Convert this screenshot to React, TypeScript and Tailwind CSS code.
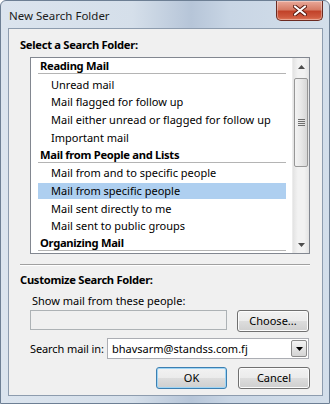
import React from "react";

const font = "font-['Segoe_UI','Noto_Sans','DejaVu_Sans',sans-serif]";
const fs = "text-[11px]";
const fb = "text-[11.2px] font-bold tracking-[-0.3px]";

function Heading({ text }: { text: string }) {
  return (
    <div className="h-[18px]">
      <div className={"pl-[9px] leading-[15px] text-black whitespace-nowrap " + fb}>{text}</div>
      <div className="ml-[7px] w-[248px] h-px bg-[#b4b4b4]" />
    </div>
  );
}

function Item({ text, selected }: { text: string; selected?: boolean }) {
  return (
    <div className="h-[18px] flex items-center">
      <div
        className={
          "ml-[7px] w-[248px] h-[16px] pl-[13px] leading-[16px] text-black whitespace-nowrap " +
          fs +
          " " +
          (selected ? "bg-[#aecff0]" : "")
        }
      >
        {text}
      </div>
    </div>
  );
}

function Btn({ label, w, def }: { label: string; w: string; def?: boolean }) {
  return (
    <div
      className={
        "h-[22px] rounded-[3px] border flex items-center justify-center text-black bg-[linear-gradient(#f2f2f2_0%,#ebebeb_50%,#dddddd_50%,#cfcfcf_100%)] " +
        fs +
        " " +
        (def ? "border-[#3c7fb1] shadow-[inset_0_0_0_1px_#9fd5f5]" : "border-[#707070] shadow-[inset_0_0_0_1px_#fcfcfc]") +
        " " +
        w
      }
    >
      {label}
    </div>
  );
}

export default function App() {
  return (
    <div
      className={
        "w-[330px] h-[404px] flex flex-col overflow-hidden rounded-t-[6px] border border-[#6d7f94] bg-[linear-gradient(90deg,#dbe4ee_0%,#d5dfea_40%,#b6c5d8_58%,#c9d6e5_70%,#d3deea_100%)] " +
        font
      }
    >
      {/* Title bar */}
      <div className="h-[27px] flex items-start shrink-0">
        <div className="pl-[8px] pt-[7px] text-[11.5px] leading-[16px] text-[#1b1b1b] whitespace-nowrap">New Search Folder</div>
        <div className="ml-auto mr-[6px] w-[47px] h-[20px] rounded-b-[5px] border border-t-0 border-[#6b2a21] bg-[linear-gradient(#e9a99a_0%,#d67c66_45%,#c2432a_55%,#cf5a3f_85%,#e07a5c_100%)] flex items-center justify-center shadow-[inset_0_0_0_1px_rgba(255,255,255,0.35)]">
          <svg width="14" height="11" viewBox="0 0 14 11">
            <path d="M2 1.5 L12 9.5 M12 1.5 L2 9.5" stroke="#5a1a10" strokeWidth="4" strokeLinecap="round" />
            <path d="M2 1.5 L12 9.5 M12 1.5 L2 9.5" stroke="#ffffff" strokeWidth="2.2" strokeLinecap="round" />
          </svg>
        </div>
      </div>

      {/* Client area */}
      <div className="ml-[7px] mr-[6px] mb-[7px] flex-1 border border-[#8d9cae] bg-[#f0f0f0] flex flex-col text-black">
        <div className={"mt-[8px] pl-[11px] leading-[16px] whitespace-nowrap " + fb}>Select a Search Folder:</div>

        {/* List box */}
        <div className="mt-[4px] ml-[21px] w-[280px] h-[197px] border border-[#828790] bg-white flex overflow-hidden">
          <div className="flex-1 flex flex-col overflow-hidden">
            <Heading text="Reading Mail" />
            <Item text="Unread mail" />
            <Item text="Mail flagged for follow up" />
            <Item text="Mail either unread or flagged for follow up" />
            <Item text="Important mail" />
            <Heading text="Mail from People and Lists" />
            <Item text="Mail from and to specific people" />
            <Item text="Mail from specific people" selected />
            <Item text="Mail sent directly to me" />
            <Item text="Mail sent to public groups" />
            <Heading text="Organizing Mail" />
          </div>
          {/* Scrollbar */}
          <div className="w-[17px] flex flex-col bg-[linear-gradient(90deg,#e3e3e3,#f2f2f2_30%,#f2f2f2_70%,#e3e3e3)] border-l border-[#ececec]">
            <div className="h-[17px] flex items-center justify-center">
              <svg width="7" height="4" viewBox="0 0 7 4">
                <path d="M0 4 L3.5 0 L7 4 Z" fill="#4d4d4d" />
              </svg>
            </div>
            <div className="mt-[3px] mx-[1px] h-[89px] rounded-[2px] border border-[#979797] bg-[linear-gradient(90deg,#f3f3f3,#e8e8e8_50%,#d6d6d6)] flex items-center justify-center">
              <div className="flex flex-col gap-[1px]">
                <div className="w-[7px] h-px bg-[#6e6e6e]" />
                <div className="w-[7px] h-px bg-[#6e6e6e]" />
                <div className="w-[7px] h-px bg-[#6e6e6e]" />
                <div className="w-[7px] h-px bg-[#6e6e6e]" />
              </div>
            </div>
            <div className="flex-1" />
            <div className="h-[17px] flex items-center justify-center">
              <svg width="7" height="4" viewBox="0 0 7 4">
                <path d="M0 0 L7 0 L3.5 4 Z" fill="#4d4d4d" />
              </svg>
            </div>
          </div>
        </div>

        {/* Separator */}
        <div className="mt-[10px] ml-[11px] w-[290px]">
          <div className="h-px bg-[#a0a0a0]" />
          <div className="h-px bg-white" />
        </div>

        <div className={"mt-[6px] pl-[11px] leading-[16px] whitespace-nowrap " + fb}>Customize Search Folder:</div>
        <div className={"mt-[5px] pl-[23px] leading-[16px] whitespace-nowrap " + fs}>Show mail from these people:</div>

        <div className="mt-[1px] ml-[21px] flex items-start">
          <div className="w-[197px] h-[20px] border border-[#adb2b5] bg-[#f0f0f0]" />
          <div className="ml-[10px]">
            <Btn label="Choose..." w="w-[72px]" />
          </div>
        </div>

        <div className="mt-[6px] ml-[21px] flex items-center">
          <div className={"w-[77px] leading-[16px] whitespace-nowrap tracking-[-0.1px] " + fs}>Search mail in:</div>
          <div className="w-[202px] h-[21px] border border-[#abadb3] bg-white flex items-center">
            <div className={"pl-[4px] flex-1 leading-[16px] whitespace-nowrap " + fs}>bhavsarm@standss.com.fj</div>
            <div className="mr-[1px] w-[16px] h-[17px] border border-[#8b8b8b] rounded-[2px] bg-[linear-gradient(#f4f4f4,#e3e3e3_50%,#d4d4d4)] flex items-center justify-center">
              <svg width="7" height="4" viewBox="0 0 7 4">
                <path d="M0 0 L7 0 L3.5 4 Z" fill="#000" />
              </svg>
            </div>
          </div>
        </div>

        <div className="mt-[8px] pr-[12px] flex justify-end gap-[11px]">
          <Btn label="OK" w="w-[71px]" def />
          <Btn label="Cancel" w="w-[72px]" />
        </div>
      </div>
    </div>
  );
}
